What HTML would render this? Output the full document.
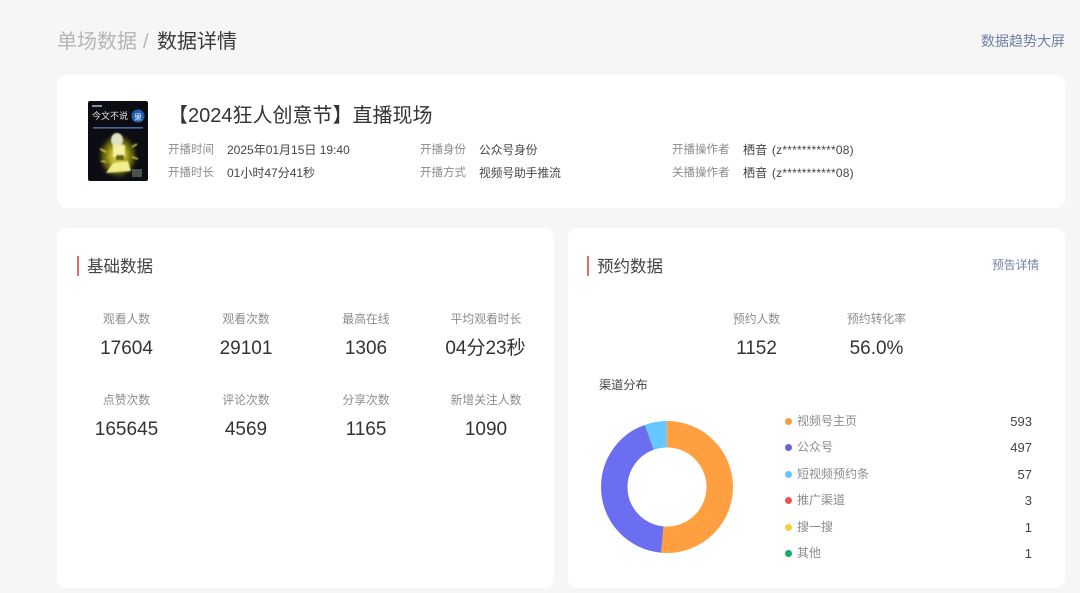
<!DOCTYPE html>
<html lang="zh-CN">
<head>
<meta charset="utf-8">
<style>
html,body{margin:0;padding:0;}
body{width:1080px;height:593px;overflow:hidden;position:relative;background:#f6f6f6;font-family:"Liberation Sans","Noto Sans CJK SC",sans-serif;color:#333;}
#w{position:absolute;left:0;top:0;width:1080px;height:593px;filter:blur(.35px);}
.t{position:absolute;white-space:nowrap;line-height:1;}
.c{transform:translateX(-50%);}
.card{position:absolute;background:#fff;border-radius:10px;}
.lb{font-size:11.5px;color:#8c8c8c;}
.val{font-size:12px;color:#444;}
.v2{font-size:11.7px;color:#444;}
.s{font-size:11.8px;color:#8c8c8c;}
.n{font-size:19px;color:#333;}
.dot{position:absolute;width:7px;height:7px;border-radius:50%;left:785px;}
.lg{font-size:12px;color:#8c8c8c;left:797px;}
.ct{font-size:13px;color:#444;transform:translateX(-100%);left:1032px;}
.bar{position:absolute;width:2px;height:20px;background:#e5686a;}
.h{font-size:16.5px;color:#444;}
</style>
</head>
<body>
<div id="w">
<div class="t" style="left:57px;top:32px;font-size:20px;color:#b5b5b5;">单场数据</div>
<div class="t" style="left:143px;top:32px;font-size:20px;color:#b5b5b5;">/</div>
<div class="t" style="left:157px;top:32px;font-size:20px;color:#3a3a3a;">数据详情</div>
<div class="t" style="left:981px;top:34px;font-size:14px;color:#6f80a8;">数据趋势大屏</div>

<div class="card" style="left:57px;top:75px;width:1008px;height:133px;"></div>
<div class="card" style="left:57px;top:228px;width:497px;height:360px;"></div>
<div class="card" style="left:568px;top:228px;width:497px;height:360px;"></div>

<svg style="position:absolute;left:88px;top:101px;" width="60" height="80" viewBox="0 0 60 80">
<defs>
<radialGradient id="g" cx="50%" cy="50%" r="50%">
<stop offset="0" stop-color="#e8e260"/><stop offset=".4" stop-color="#b0aa20"/><stop offset=".75" stop-color="#4a4a0c"/><stop offset="1" stop-color="#111" stop-opacity="0"/>
</radialGradient>
<filter id="b"><feGaussianBlur stdDeviation=".7"/></filter>
</defs>
<rect width="60" height="80" rx="2" fill="#0c0d12"/>
<rect x="4" y="4" width="10" height="2" fill="#8890a0"/>
<text x="4" y="18" font-size="9" fill="#e8e8e8" font-family="'Liberation Sans','Noto Sans CJK SC',sans-serif">今文不说</text>
<circle cx="50" cy="15" r="6.5" fill="#1f5fb0"/>
<text x="46" y="19" font-size="8" fill="#e4ecf8" font-family="'Liberation Sans','Noto Sans CJK SC',sans-serif">果</text>
<rect x="5" y="26" width="50" height="1.6" fill="#4a68a8"/>
<ellipse cx="30" cy="55" rx="21" ry="24" fill="url(#g)"/>
<g filter="url(#b)">
<ellipse cx="29" cy="39" rx="6" ry="7" fill="#dfe1c4"/>
<rect x="25" y="44" width="12" height="12" fill="#f4f2a0"/>
<path d="M18 72l7-10 15-2 3 10z" fill="#f0ee90"/>
<rect x="28" y="54" width="8" height="5" fill="#5e5e10"/>
<path d="M12 48l6 3M44 46l5-3M13 60l5 1M44 56l6 2" stroke="#e6e370" stroke-width="1.4"/>
</g>
<rect x="44" y="68" width="10" height="8" fill="#4a5250"/>
</svg>

<div class="t" style="left:168px;top:106px;font-size:20px;color:#333;">【2024狂人创意节】直播现场</div>

<div class="t lb" style="left:168px;top:145px;">开播时间</div>
<div class="t val" style="left:227px;top:144px;">2025年01月15日 19:40</div>
<div class="t lb" style="left:168px;top:168px;">开播时长</div>
<div class="t val" style="left:227px;top:167px;">01小时47分41秒</div>
<div class="t lb" style="left:420px;top:145px;">开播身份</div>
<div class="t v2" style="left:479px;top:145px;">公众号身份</div>
<div class="t lb" style="left:420px;top:168px;">开播方式</div>
<div class="t v2" style="left:479px;top:168px;">视频号助手推流</div>
<div class="t lb" style="left:672px;top:145px;">开播操作者</div>
<div class="t val" style="left:743px;top:144px;word-spacing:1px;letter-spacing:.2px;">栖音 (z***********08)</div>
<div class="t lb" style="left:672px;top:168px;">关播操作者</div>
<div class="t val" style="left:743px;top:167px;word-spacing:1px;letter-spacing:.2px;">栖音 (z***********08)</div>

<div class="bar" style="left:77px;top:256px;"></div>
<div class="t h" style="left:87px;top:259px;">基础数据</div>
<div class="bar" style="left:587px;top:256px;"></div>
<div class="t h" style="left:597px;top:259px;">预约数据</div>
<div class="t" style="left:992px;top:260px;font-size:11.8px;color:#6f80a8;">预告详情</div>

<div class="t s c" style="left:126.5px;top:314px;">观看人数</div>
<div class="t n c" style="left:126.5px;top:339px;">17604</div>
<div class="t s c" style="left:246px;top:314px;">观看次数</div>
<div class="t n c" style="left:246px;top:339px;">29101</div>
<div class="t s c" style="left:366px;top:314px;">最高在线</div>
<div class="t n c" style="left:366px;top:339px;">1306</div>
<div class="t s c" style="left:486px;top:314px;">平均观看时长</div>
<div class="t n c" style="left:485.5px;top:339px;">04分23秒</div>

<div class="t s c" style="left:126.5px;top:395px;">点赞次数</div>
<div class="t n c" style="left:126.5px;top:420px;">165645</div>
<div class="t s c" style="left:246px;top:395px;">评论次数</div>
<div class="t n c" style="left:246px;top:420px;">4569</div>
<div class="t s c" style="left:366px;top:395px;">分享次数</div>
<div class="t n c" style="left:366px;top:420px;">1165</div>
<div class="t s c" style="left:486px;top:395px;">新增关注人数</div>
<div class="t n c" style="left:486px;top:420px;">1090</div>

<div class="t s c" style="left:756.5px;top:314px;">预约人数</div>
<div class="t n c" style="left:756.5px;top:339px;">1152</div>
<div class="t s c" style="left:876.5px;top:314px;">预约转化率</div>
<div class="t n c" style="left:876.5px;top:339px;">56.0%</div>

<div class="t" style="left:599px;top:379px;font-size:12.2px;color:#444;">渠道分布</div>

<svg style="position:absolute;left:596px;top:416px;" width="142" height="142" viewBox="0 0 142 142">
<g transform="rotate(-90 71 71)" fill="none" stroke-width="26.5">
<circle cx="71" cy="71" r="52.75" pathLength="1152" stroke="#ff9f40" stroke-dasharray="593 559"/>
<circle cx="71" cy="71" r="52.75" pathLength="1152" stroke="#6b6ef0" stroke-dasharray="497 655" stroke-dashoffset="-593"/>
<circle cx="71" cy="71" r="52.75" pathLength="1152" stroke="#66c6ff" stroke-dasharray="62 1090" stroke-dashoffset="-1090"/>
</g>
</svg>

<div class="dot" style="top:418px;background:#f59d42;"></div>
<div class="t lg" style="top:415px;">视频号主页</div>
<div class="t ct" style="top:415px;">593</div>
<div class="dot" style="top:444px;background:#6464d8;"></div>
<div class="t lg" style="top:441px;">公众号</div>
<div class="t ct" style="top:441px;">497</div>
<div class="dot" style="top:471px;background:#66c6ff;"></div>
<div class="t lg" style="top:468px;">短视频预约条</div>
<div class="t ct" style="top:468px;">57</div>
<div class="dot" style="top:497px;background:#ea5455;"></div>
<div class="t lg" style="top:494px;">推广渠道</div>
<div class="t ct" style="top:494px;">3</div>
<div class="dot" style="top:524px;background:#f8cf3c;"></div>
<div class="t lg" style="top:521px;">搜一搜</div>
<div class="t ct" style="top:521px;">1</div>
<div class="dot" style="top:550px;background:#10b060;"></div>
<div class="t lg" style="top:547px;">其他</div>
<div class="t ct" style="top:547px;">1</div>
</div>
</body>
</html>
